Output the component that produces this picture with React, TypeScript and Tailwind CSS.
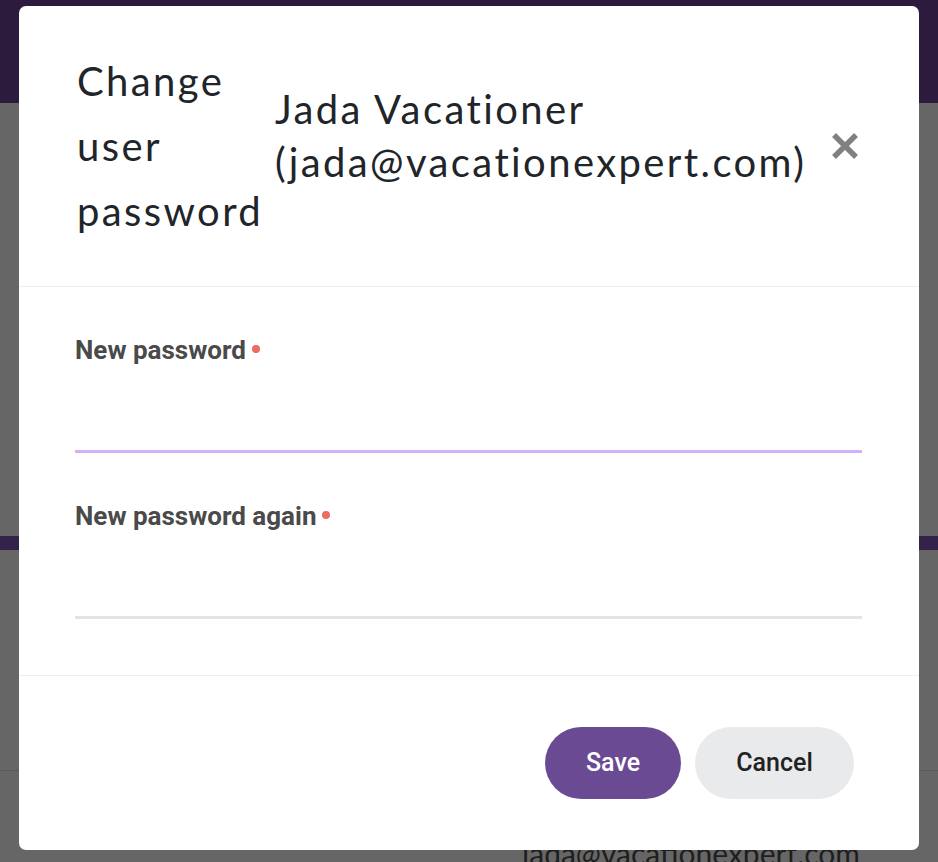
import React from "react";

function RequiredLabel({ text }: { text: string }) {
  return (
    <label className="flex items-start text-[26px] leading-[30px] font-bold text-[#4a4a4a]">
      {text}
      <span className="ml-[6px] mt-[10px] h-[8px] w-[8px] shrink-0 rounded-full bg-[#ec6a5e]" />
    </label>
  );
}

export default function App() {
  return (
    <div className="relative h-[862px] w-full overflow-hidden bg-[#666666]" style={{ fontFamily: "Lato, 'Open Sans', sans-serif" }}>
      {/* page behind the overlay */}
      <div className="h-[103px] bg-[#2c1b3c]" />
      <div className="h-[433px]" />
      <div className="h-[14px] bg-[#33234a]" />
      <div className="h-[221px] border-b border-[#5a5a5a]" />
      <div className="flex justify-end pr-[78px] pt-[64px]">
        <span className="text-[30px] leading-[36px] text-[#1e1e1e]">jada@vacationexpert.com</span>
      </div>

      {/* modal */}
      <div className="absolute left-[19px] top-[6px] w-[900px] rounded-[7px] bg-white">
        <div className="flex h-[281px] items-center border-b border-[#eeeeee] pl-[58px] pr-[61px]">
          <h4 className="w-[198px] shrink-0 text-[40px] leading-[65px] tracking-[2.4px] text-[#212529]">Change user password</h4>
          <div className="mb-[20px] flex-1 text-[40px] leading-[53px] tracking-[2.4px] text-[#212529]">
            Jada Vacationer
            <br />
            (jada@vacationexpert.com)
          </div>
          <button aria-label="Close" className="shrink-0">
            <svg width="26" height="26" viewBox="0 0 26 26">
              <path d="M2 2L24 24M24 2L2 24" stroke="#808080" strokeWidth="5.5" />
            </svg>
          </button>
        </div>

        <div className="flex flex-col gap-[48px] border-b border-[#eeeeee] pb-[56px] pl-[56px] pr-[57px] pt-[48px]" style={{ fontFamily: "Roboto, sans-serif" }}>
          <div>
            <RequiredLabel text="New password" />
            <input type="password" className="block h-[88px] w-full border-b-[3px] border-[#d3b1f7] outline-none" />
          </div>
          <div>
            <RequiredLabel text="New password again" />
            <input type="password" className="block h-[88px] w-full border-b-[3px] border-[#e3e3e3] outline-none" />
          </div>
        </div>

        <div className="flex h-[174px] items-start justify-end gap-[14px] pr-[65px] pt-[51px]" style={{ fontFamily: "Roboto, sans-serif" }}>
          <button className="h-[72px] w-[136px] rounded-full bg-[#6b4a94] text-[25px] font-medium text-white">Save</button>
          <button className="h-[72px] w-[159px] rounded-full bg-[#e9eaec] text-[25px] font-medium text-[#222222]">Cancel</button>
        </div>
      </div>
    </div>
  );
}
